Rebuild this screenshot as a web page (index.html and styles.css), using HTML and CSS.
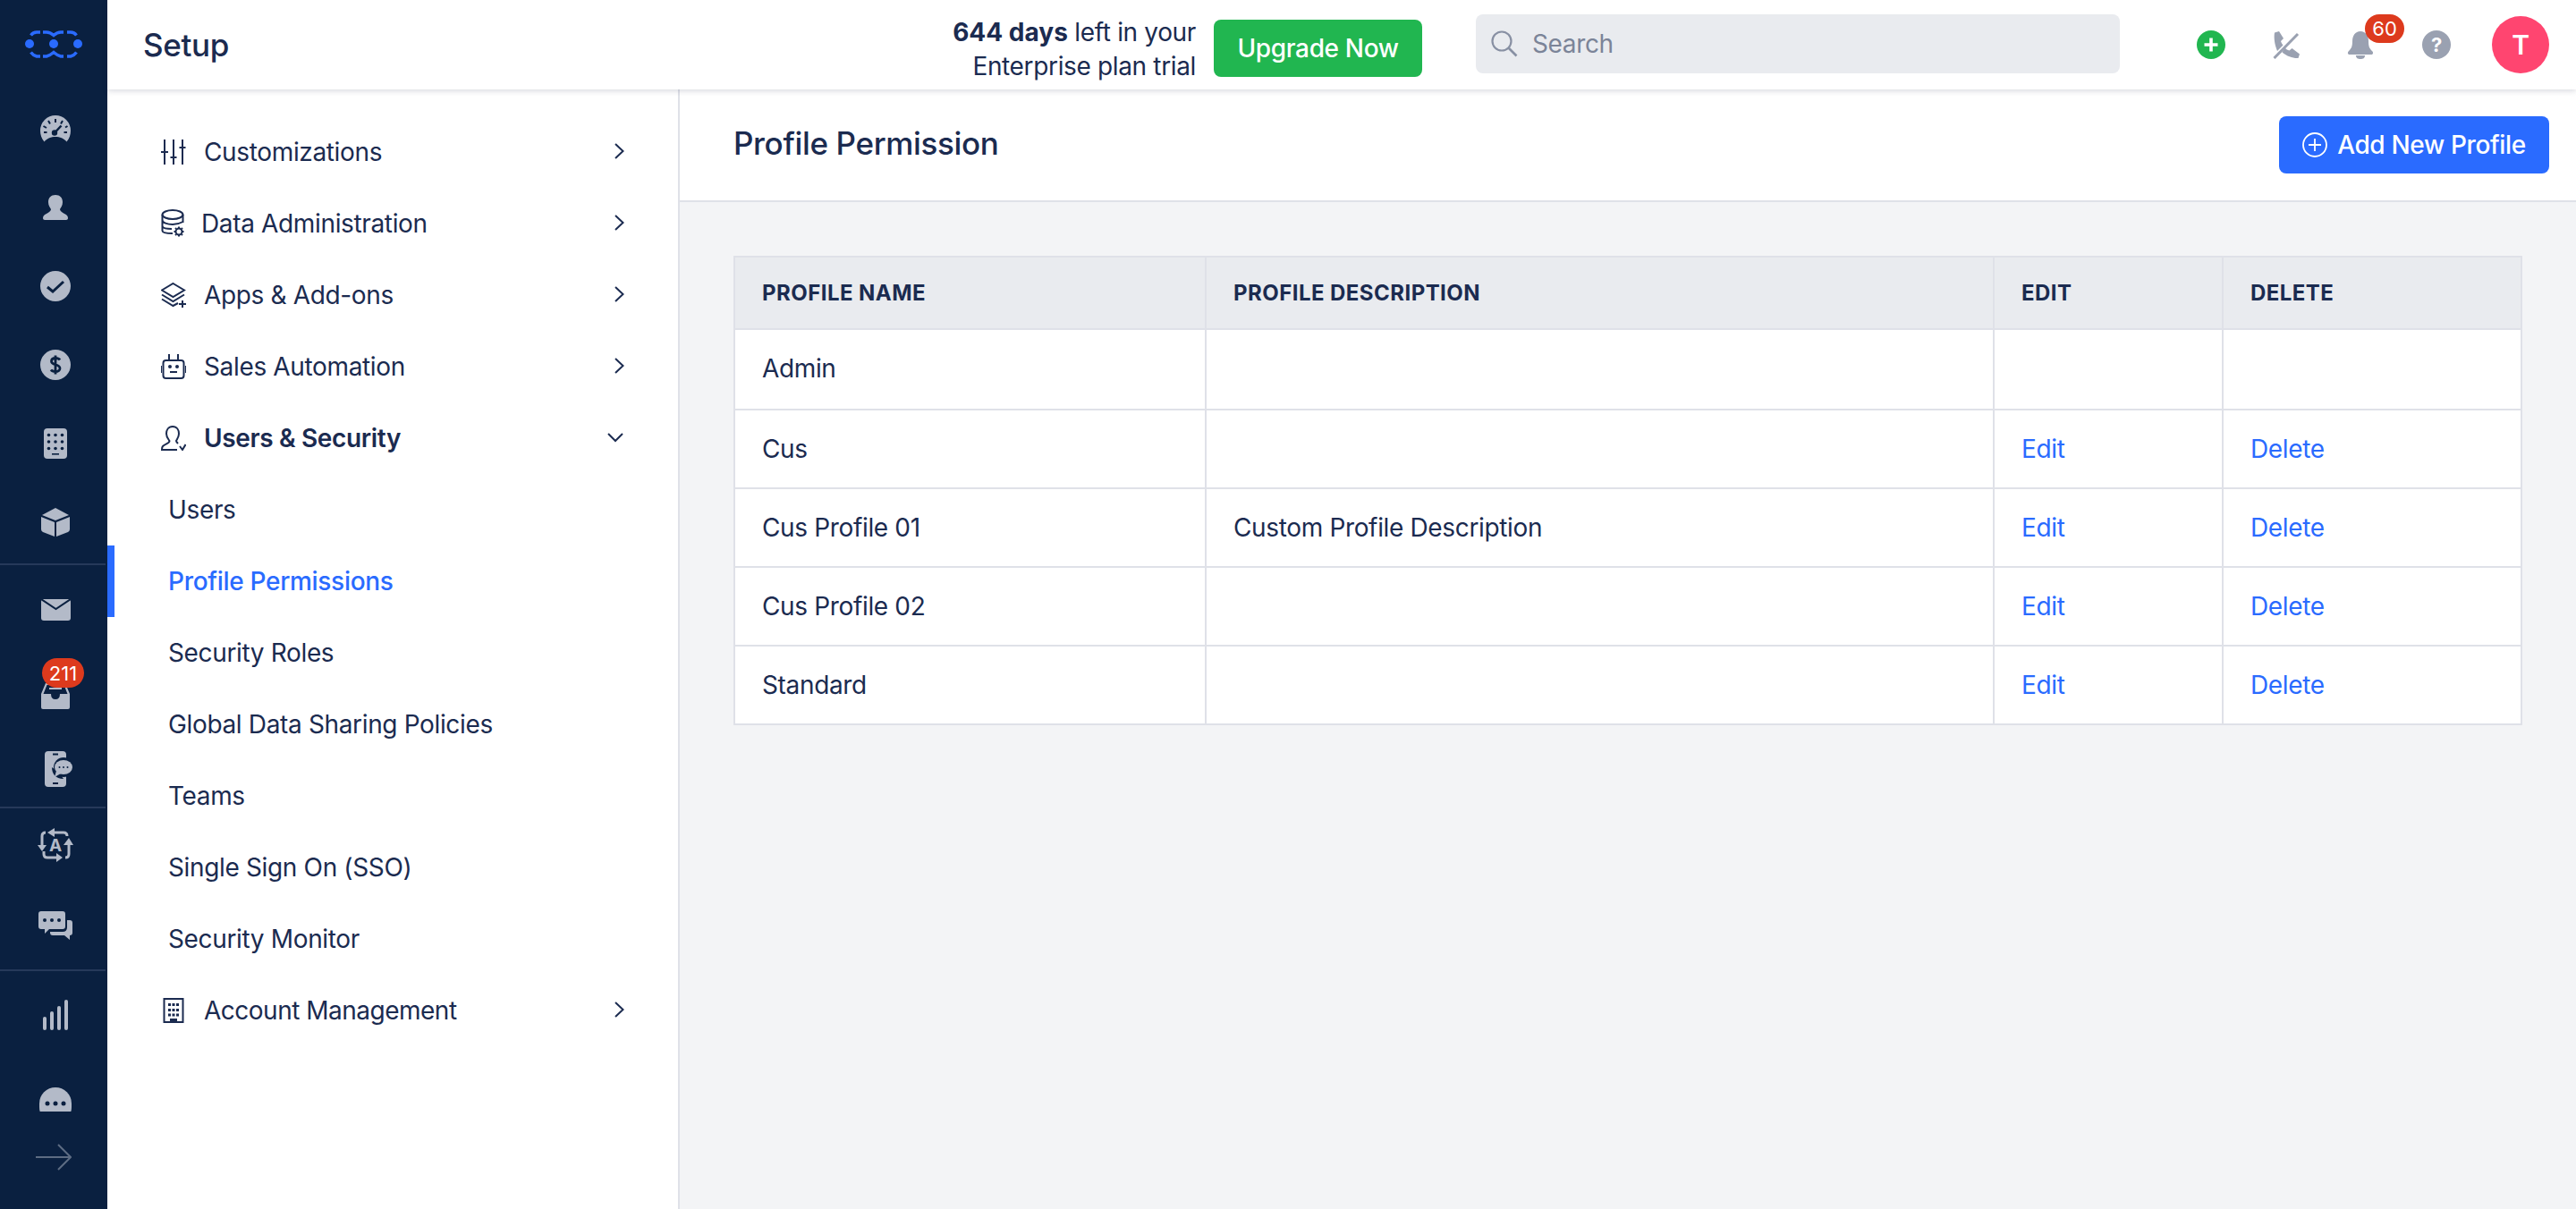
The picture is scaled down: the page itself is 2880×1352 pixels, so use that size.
FILE: index.html
```html
<!DOCTYPE html>
<html lang="en">
<head>
<meta charset="utf-8">
<title>Profile Permission</title>
<link rel="stylesheet" href="styles.css">
</head>
<body>
<div class="app">
  <aside class="rail">
    <div class="rail-scroll">
      <div class="rail-logo">
        <svg class="logo" width="64" height="32" viewBox="0 0 64 32"><g fill="#2a6bff"><circle cx="5" cy="15" r="5"/><circle cx="32" cy="15" r="5"/><circle cx="59" cy="15" r="5"/></g><g fill="none" stroke="#2a6bff" stroke-width="3.4"><path d="M17 2H13Q9 2 6.5 5.5"/><path d="M20 2H24Q28 2 32 5.5Q36 2 40 2H43"/><path d="M47 2H51Q55 2 57.5 5.5"/><path d="M6.500 24.500Q9 28 13 29H17"/><path d="M20 29H24Q28 28 32 24.500Q36 28 40 29H43"/><path d="M47 29H51Q55 28 57.500 24.500"/></g></svg>
      </div>
      <div class="rail-group rail-first">
        <div class="slot"><svg width="34" height="30" viewBox="0 0 34 30"><path class="ri" d="M4.500 29.500C1.500 26 0 22 0 17A17 17 0 0 1 34 17C34 22 32.500 26 29.500 29.500C26 25.500 22 24 17 24C12 24 8 25.500 4.500 29.500Z"/><g class="rd-s" stroke-width="2"><path d="M17 4V8M9 6L11 9.500M25 6L23 9.500M3.500 12L7 14M4 19H7.500M30 19H26.500M30.500 12L28 13.500"/></g><path class="rd-s" stroke-width="2.500" d="M23.500 11.500L17.500 18"/><circle class="rd" cx="16" cy="19.500" r="3.200"/></svg></div>
        <div class="slot"><svg width="28" height="28" viewBox="0 0 28 28"><path class="ri" d="M14 0C9 0 6 3 6 8C6 12 8 14 9 16C9 18 7 19 4 21C1 22 0 24 0 26C0 27 1 28 2 28H26C27 28 28 27 28 26C28 24 27 22 24 21C21 19 19 18 19 16C20 14 22 12 22 8C22 3 19 0 14 0Z"/></svg></div>
        <div class="slot"><svg width="34" height="34" viewBox="0 0 34 34"><circle class="ri" cx="17" cy="17" r="17"/><path class="rd-s" stroke-width="3" d="M8 18L14 23L26 12"/></svg></div>
        <div class="slot"><svg width="34" height="34" viewBox="0 0 34 34"><circle class="ri" cx="17" cy="17" r="17"/><path class="rd-s" stroke-width="2.800" d="M22 11.500C21 10 19 9.500 17 9.500C14 9.500 12.500 11 12.500 13C12.500 18 22 15.500 22 21C22 23 20 24.500 17 24.500C15 24.500 13 24 12 22.500M17 6.500V27.500"/></svg></div>
        <div class="slot"><svg width="26" height="34" viewBox="0 0 26 34"><rect class="ri" width="26" height="34" rx="4"/><g class="rd"><circle cx="5.500" cy="7.500" r="1.800"/><circle cx="13" cy="7.500" r="1.800"/><circle cx="20.500" cy="7.500" r="1.800"/><circle cx="5.500" cy="15" r="1.800"/><circle cx="13" cy="15" r="1.800"/><circle cx="20.500" cy="15" r="1.800"/><circle cx="5.500" cy="22.500" r="1.800"/><circle cx="13" cy="22.500" r="1.800"/><circle cx="20.500" cy="22.500" r="1.800"/><rect x="9" y="28" width="8" height="1.600"/></g></svg></div>
        <div class="slot"><svg width="32" height="32" viewBox="0 0 32 32"><path class="ri" d="M16 0L31 8L16 14L1 8Z"/><path class="ri" d="M0 10L15 16V32L2 27Q0 26 0 24Z"/><path class="ri" d="M32 10L17 16V32L30 27Q32 26 32 24Z"/></svg></div>
      </div>
      <div class="rail-group rail-second">
        <div class="slot"><svg width="33" height="24" viewBox="0 0 33 24"><path class="ri" d="M1 0H32Q33 1 33 3V21Q33 24 30 24H3Q0 24 0 21V3Q0 1 1 0Z"/><path class="rd-s" stroke-width="2" d="M0 0L16.500 11L33 0"/></svg></div>
        <div class="slot slot-inbox">
          <svg width="32" height="29" viewBox="0 0 32 29"><path class="ri" d="M5 0H27L32 12V27Q32 29 30 29H2Q0 29 0 27V12Z"/><path class="rd" d="M6.500 2H25.500L29.500 12H21Q21 18 16 18Q11 18 11 12H2.500Z"/><rect class="ri" x="9" y="5" width="14" height="2"/></svg>
          <span class="count count-rail">211</span>
        </div>
        <div class="slot slot-phone"><svg width="32" height="40" viewBox="0 0 32 40"><rect class="ri" width="24" height="40" rx="4"/><rect class="rd" x="9" y="2.500" width="6" height="2"/><rect class="rd" x="9" y="35" width="6" height="2"/><ellipse class="rd" cx="21" cy="18" rx="11" ry="11"/><path class="rd" d="M8 18C8 25 12 31 21 31L16 24Z"/><ellipse class="ri" cx="21" cy="18" rx="10" ry="8"/><path class="ri" d="M13 22L11 29L18 25Z"/><g class="rd"><circle cx="16.500" cy="18" r="1"/><circle cx="21" cy="18" r="1"/><circle cx="25.500" cy="18" r="1"/></g></svg></div>
      </div>
      <div class="rail-group rail-third">
        <div class="slot slot-sm"><svg width="40" height="38" viewBox="0 0 40 38"><g fill="none" stroke="#b3bac8" stroke-width="3"><path d="M18 5H29Q33 5 33 9"/><path d="M5 19V9Q5 5 9 5"/><path d="M35 19V29Q35 33 31 33"/><path d="M7 26V29Q7 33 11 33H21"/></g><g class="ri"><path d="M19 0V10L11 5Z"/><path d="M0 19H10L5 26Z"/><path d="M29 19H40L35 11Z"/><path d="M21 28V38L28 33Z"/></g><text class="rail-a" x="20" y="26">A</text></svg></div>
        <div class="slot slot-lg"><svg width="38" height="32" viewBox="0 0 38 32"><path class="ri" d="M3 0H27Q30 0 30 3V17Q30 20 27 20H12L7 25V20H3Q0 20 0 17V3Q0 0 3 0Z"/><g class="rd"><circle cx="7" cy="10" r="2"/><circle cx="15" cy="10" r="2"/><circle cx="23" cy="10" r="2"/></g><path class="rd" d="M33 8V18Q33 23 28 23H10V25H28Q35 25 35 18V8Z"/><path class="ri" d="M32 10H35Q38 10 38 13V24Q38 27 35 27V32L29 27H16Q13 27 13 24V23H27Q32 23 32 18Z"/></svg></div>
      </div>
      <div class="rail-group rail-fourth">
        <div class="slot slot-bars"><svg width="28" height="34" viewBox="0 0 28 34"><g class="ri"><rect y="19" width="4" height="15" rx="2"/><rect x="8" y="13" width="4" height="21" rx="2"/><rect x="16" y="7" width="4" height="27" rx="2"/><rect x="24" width="4" height="34" rx="2"/></g></svg></div>
        <div class="slot slot-bubble"><svg width="36" height="40" viewBox="0 0 36 40"><rect class="ri" width="36" height="40" rx="18"/><g class="rd"><circle cx="9" cy="18" r="2.500"/><circle cx="18" cy="18" r="2.500"/><circle cx="27" cy="18" r="2.500"/></g></svg></div>
      </div>
    </div>
    <div class="rail-foot"><svg width="40" height="30" viewBox="0 0 40 30"><path fill="none" stroke="#5d6c83" stroke-width="2" d="M0 15H39M25 1L39 15L25 29"/></svg></div>
  </aside>

  <div class="shell">
    <header class="topbar">
      <h1 class="app-title">Setup</h1>
      <p class="trial"><b>644 days</b> left in your<br>Enterprise plan trial</p>
      <a class="upgrade">Upgrade Now</a>
      <div class="search">
        <svg width="30" height="30" viewBox="0 0 30 30"><circle cx="12" cy="12" r="10.500" fill="none" stroke="#8890a3" stroke-width="2.200"/><path d="M19.500 19.500L28.500 28.500" stroke="#8890a3" stroke-width="2.600"/></svg>
        <span class="search-text">Search</span>
      </div>
      <div class="top-icons">
        <svg class="ti" width="32" height="32" viewBox="0 0 32 32"><circle cx="16" cy="16" r="16" fill="#21b650"/><path d="M16 8.500V23.500M8.500 16H23.500" stroke="#fff" stroke-width="3.600"/></svg>
        <svg class="ti" width="32" height="32" viewBox="0 0 32 32"><path fill="#9aa1b1" d="M3 2.500L8 1L13 9L10 12C10.500 14 11.500 15 12.500 16.500L6 23C3 16 2 8 3 2.500Z"/><path fill="#9aa1b1" d="M14.500 19.500C16 21 17.500 22 19.500 22.500L22.500 20L31 26.500L29.500 31C24 31.500 17 29 11.500 24.500Z"/><path d="M2.500 31L29 4" stroke="#9aa1b1" stroke-width="3"/></svg>
        <div class="ti bell"><svg width="30" height="32" viewBox="0 0 30 32"><path fill="#9aa1b1" d="M15 1C21 1 24 6 24 12C24 18 25 20 28 23C30 25 29 27 27 27H3C1 27 0 25 2 23C5 20 6 18 6 12C6 6 9 1 15 1Z"/><path fill="#9aa1b1" d="M10 28H20C20 31 18 32 15 32C12 32 10 31 10 28Z"/></svg><span class="count count-bell">60</span></div>
        <div class="ti help">?</div>
        <div class="avatar">T</div>
      </div>
    </header>

    <div class="below">
      <nav class="side">
        <a class="nav-row"><span class="nav-ic"><svg width="28" height="28" viewBox="0 0 28 28"><path class="ln" d="M4 0V28M14 0V28M24 0V28"/><path class="ln" stroke-width="2.500" d="M0 14H8M10.500 20H17.500M20.500 9H27.500"/></svg></span><span class="nav-label">Customizations</span><svg class="chev" width="24" height="24" viewBox="0 0 24 24"><path class="ln" stroke-width="2.400" d="M8 4L16.500 12L8 20"/></svg></a>
        <a class="nav-row"><span class="nav-ic nav-ic-data"><svg width="26" height="32" viewBox="0 0 26 32"><ellipse class="ln" cx="13" cy="6" rx="11.500" ry="5"/><path class="ln" d="M1.500 6V24C1.500 26 5 27 13 27M24.500 6V15M1.500 12C1.500 15 7 17 13 17C17 17 20 16.500 24.500 14M1.500 19C2 21 7 22 12 22"/><circle class="ln" stroke-width="2.500" cx="20" cy="25" r="3.500"/><path class="ln" stroke-width="1.800" d="M20 19.500V21M20 29V30.500M14.500 25H16M24 25H25.500M16 21L17 22M23 28L24 29M24 21L23 22M17 28L16 29"/></svg></span><span class="nav-label">Data Administration</span><svg class="chev" width="24" height="24" viewBox="0 0 24 24"><path class="ln" stroke-width="2.400" d="M8 4L16.500 12L8 20"/></svg></a>
        <a class="nav-row"><span class="nav-ic"><svg width="28" height="28" viewBox="0 0 28 28"><path class="ln" d="M13.500 1L26 8.500L13.500 16L1 8.500Z"/><path class="ln" d="M1 13.500L13.500 21L26 13.500M1 18.500L13.500 26L19 23"/><path class="ln" d="M24 20V28M20 24H28"/></svg></span><span class="nav-label">Apps &amp; Add-ons</span><svg class="chev" width="24" height="24" viewBox="0 0 24 24"><path class="ln" stroke-width="2.400" d="M8 4L16.500 12L8 20"/></svg></a>
        <a class="nav-row"><span class="nav-ic"><svg width="28" height="28" viewBox="0 0 28 28"><rect class="ln" x="2.500" y="7" width="23" height="20" rx="3"/><path class="ln" d="M9 0V7M19 0V7M0 13V21M28 13V21M10 20H18"/><circle cx="10" cy="14" r="2" fill="#1b2b50"/><circle cx="18" cy="14" r="2" fill="#1b2b50"/></svg></span><span class="nav-label">Sales Automation</span><svg class="chev" width="24" height="24" viewBox="0 0 24 24"><path class="ln" stroke-width="2.400" d="M8 4L16.500 12L8 20"/></svg></a>
        <a class="nav-row nav-open"><span class="nav-ic"><svg width="28" height="28" viewBox="0 0 28 28"><path class="ln" d="M13 1C8 1 6 5 6 9C6 13 8 15 9.500 17C9.500 20 5 20 2 23C1 24 1 26 1 27H18M13 1C18 1 20 5 20 9C20 13 18 15 17 17C17 18 18 19 19 20"/><path class="ln" d="M21 23L24 27L27.500 21"/></svg></span><span class="nav-label">Users &amp; Security</span><svg class="chev chev-open" width="24" height="24" viewBox="0 0 24 24"><path class="ln" stroke-width="2.400" d="M4 8L12 16L20 8"/></svg></a>
        <a class="nav-sub">Users</a>
        <a class="nav-sub is-active">Profile Permissions</a>
        <a class="nav-sub">Security Roles</a>
        <a class="nav-sub">Global Data Sharing Policies</a>
        <a class="nav-sub">Teams</a>
        <a class="nav-sub">Single Sign On (SSO)</a>
        <a class="nav-sub">Security Monitor</a>
        <a class="nav-row nav-acc"><span class="nav-ic nav-ic-acc"><svg width="24" height="28" viewBox="0 0 24 28"><rect class="ln" x="1.500" y="1" width="21" height="26"/><g fill="#1b2b50"><rect x="6" y="6" width="3" height="3"/><rect x="10.500" y="6" width="3" height="3"/><rect x="15" y="6" width="3" height="3"/><rect x="6" y="12" width="3" height="3"/><rect x="10.500" y="12" width="3" height="3"/><rect x="15" y="12" width="3" height="3"/><rect x="6" y="17.500" width="3" height="3"/><rect x="10.500" y="17.500" width="3" height="3"/><rect x="15" y="17.500" width="3" height="3"/><rect x="8" y="23" width="8" height="4"/></g></svg></span><span class="nav-label">Account Management</span><svg class="chev" width="24" height="24" viewBox="0 0 24 24"><path class="ln" stroke-width="2.400" d="M8 4L16.500 12L8 20"/></svg></a>
      </nav>

      <main class="main">
        <div class="page-head">
          <h2 class="page-title">Profile Permission</h2>
          <a class="add-btn"><svg width="28" height="28" viewBox="0 0 28 28"><circle cx="14" cy="14" r="13" fill="none" stroke="#fff" stroke-width="1.800"/><path d="M14 7V21M7 14H21" stroke="#fff" stroke-width="1.800"/></svg>Add New Profile</a>
        </div>
        <div class="page-body">
          <table class="grid">
            <colgroup><col class="c1"><col class="c2"><col class="c3"><col class="c4"></colgroup>
            <thead><tr><th>PROFILE NAME</th><th>PROFILE DESCRIPTION</th><th>EDIT</th><th>DELETE</th></tr></thead>
            <tbody>
              <tr class="row-first"><td>Admin</td><td></td><td></td><td></td></tr>
              <tr><td>Cus</td><td></td><td><a>Edit</a></td><td><a>Delete</a></td></tr>
              <tr><td>Cus Profile 01</td><td>Custom Profile Description</td><td><a>Edit</a></td><td><a>Delete</a></td></tr>
              <tr><td>Cus Profile 02</td><td></td><td><a>Edit</a></td><td><a>Delete</a></td></tr>
              <tr><td>Standard</td><td></td><td><a>Edit</a></td><td><a>Delete</a></td></tr>
            </tbody>
          </table>
        </div>
      </main>
    </div>
  </div>
</div>
</body>
</html>
```
FILE: styles.css
```css
* { box-sizing: border-box; }
html, body { margin: 0; height: 100%; }
body { font-family: Inter, "Liberation Sans", sans-serif; color: #1b2b50; font-size: 28px; letter-spacing: -.35px; overflow: hidden; }
h1, h2, p { margin: 0; }
svg { display: block; flex: none; }

.app { display: flex; height: 1352px; }

.rail { width: 120px; flex: none; background: #0a2040; display: flex; flex-direction: column; }
.rail-scroll { height: 1243px; overflow: hidden; flex: none; }
.rail-logo { height: 100px; padding: 34px 0 0 28px; }
.rail-group { width: 118px; border-bottom: 2px solid #26395a; }
.rail-fourth { border-bottom: 0; }
.rail-first { border-bottom: 2px solid #26395a; padding-bottom: 2px; }
.rail-second { padding-top: 6px; }
.slot { height: 88px; width: 124px; display: flex; align-items: center; justify-content: center; position: relative; }
.slot-inbox { padding-top: 16px; }
.slot-phone { padding: 4px 0 0 8px; }
.slot-sm { height: 82px; }
.slot-lg { height: 98px; }
.slot-bars { height: 98px; }
.slot-bubble { height: 88px; padding-top: 16px; }
.ri { fill: #b3bac8; }
.rd { fill: #0a2040; }
.rd-s { fill: none; stroke: #0a2040; }
.rail-a { font: 700 19px Inter, sans-serif; fill: #b3bac8; text-anchor: middle; }
.rail-foot { flex: 1; padding: 36px 0 0 40px; }

.count { position: absolute; background: #dd3a1d; color: #fff; border-radius: 17px; display: flex; align-items: center; justify-content: center; letter-spacing: 0; }
.count-rail { left: 47px; top: 10px; width: 47px; height: 33px; font-size: 22px; }
.count-bell { left: 20px; top: -18px; width: 44px; height: 32px; font-size: 22px; }

.shell { flex: 1; min-width: 0; display: flex; flex-direction: column; }
.topbar { height: 100px; flex: none; background: #fff; display: flex; align-items: center; padding: 0 30px 0 40px; box-shadow: 0 2px 6px rgba(30, 40, 70, .16); position: relative; z-index: 2; }
.app-title { font-size: 35px; font-weight: 500; line-height: 44px; margin-right: auto; }
.trial { text-align: right; line-height: 38px; font-size: 28px; margin-right: 20px; padding-top: 9px; }
.trial b { font-weight: 700; letter-spacing: 0; }
.upgrade { width: 233px; height: 64px; background: #21b650; color: #fff; border-radius: 8px; font-weight: 500; display: flex; align-items: center; justify-content: center; margin-right: 60px; margin-top: 8px; }
.search { width: 720px; height: 66px; background: #e9ebef; border-radius: 8px; display: flex; align-items: center; gap: 16px; padding: 0 0 0 17px; margin-top: -2px; }
.search-text { color: #7b8498; }
.top-icons { display: flex; align-items: center; margin-left: 86px; }
.ti { flex: none; margin-right: 52px; }
.bell { position: relative; width: 32px; height: 32px; }
.help { width: 32px; height: 32px; border-radius: 50%; background: #9aa1b1; color: #fff; font-weight: 700; font-size: 22px; line-height: 32px; text-align: center; margin-right: 46px; }
.avatar { width: 64px; height: 64px; border-radius: 50%; background: #ff4570; color: #fff; font-weight: 600; font-size: 30px; display: flex; align-items: center; justify-content: center; }

.below { flex: 1; display: flex; min-height: 0; }
.side { width: 640px; flex: none; background: #fff; border-right: 2px solid #dfe1e8; padding-top: 30px; }
.ln { fill: none; stroke: #1b2b50; stroke-width: 2; }
.nav-row, .nav-sub { height: 80px; display: flex; align-items: center; padding-left: 60px; padding-right: 54px; }
.nav-ic { width: 28px; margin-right: 20px; flex: none; }
.nav-ic-data { margin-right: 17px; }
.nav-ic-acc { padding-left: 2px; }
.nav-label { flex: 1; }
.nav-acc .nav-label { letter-spacing: -.5px; }
.nav-open .nav-label { font-weight: 600; }
.chev { margin-top: -2px; }
.chev-open { margin-right: 4px; }
.nav-sub { padding-left: 68px; }
.is-active { color: #2a6bff; font-weight: 500; letter-spacing: -.3px; box-shadow: inset 8px 0 0 #2a6bff; }

.main { flex: 1; min-width: 0; background: #f3f4f6; }
.page-head { height: 126px; background: #fff; border-bottom: 2px solid #dfe1e8; display: flex; align-items: center; justify-content: space-between; padding: 0 30px 0 60px; }
.page-title { font-size: 35px; font-weight: 500; line-height: 44px; margin-top: -5px; }
.add-btn { height: 64px; width: 302px; background: #2a6bff; color: #fff; border-radius: 8px; display: flex; align-items: center; justify-content: center; gap: 11px; font-weight: 500; }

.page-body { padding: 60px 60px 0; }
.grid { width: 2000px; table-layout: fixed; border-collapse: separate; border-spacing: 0; border-top: 2px solid #dfe1e8; border-left: 2px solid #dfe1e8; background: #fff; }
.c1 { width: 527px; }
.c2 { width: 881px; }
.c3 { width: 256px; }
.c4 { width: 334px; }
.grid th, .grid td { border-right: 2px solid #dfe1e8; border-bottom: 2px solid #dfe1e8; padding: 0 0 0 30px; text-align: left; }
.grid th { height: 81px; background: #e9ebef; font-size: 24px; font-weight: 700; letter-spacing: .45px; }
.grid td { height: 88px; }
.grid .row-first td { height: 90px; padding-bottom: 2px; }
.grid a { color: #2a6bff; }
```
